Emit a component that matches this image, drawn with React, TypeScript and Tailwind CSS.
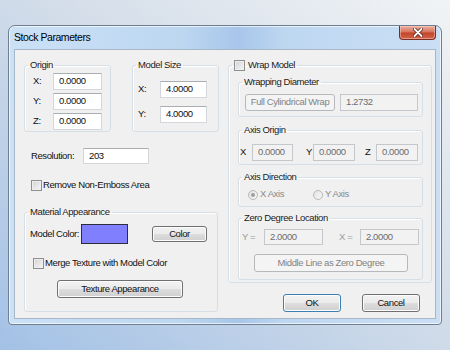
import React from 'react';

// Windows 7 style "Stock Parameters" dialog

const btnFace =
  'bg-[linear-gradient(#f2f2f2_0%,#ebebeb_48%,#dddddd_52%,#cfcfcf_100%)] shadow-[inset_0_0_0_1px_#fcfcfc]';

function Field({ value, className = '', disabled = false }: { value: string; className?: string; disabled?: boolean }) {
  return (
    <div
      className={`flex items-center pl-[5px] border ${
        disabled
          ? 'bg-[#f2f2f2] text-[#6d6d6d] border-[#c4c7cb]'
          : 'bg-white text-[#111] border-[#d3d7dc] border-t-[#abadb3]'
      } ${className}`}
    >
      {value}
    </div>
  );
}

function Btn({
  children,
  className = '',
  disabled = false,
  primary = false,
}: {
  children: React.ReactNode;
  className?: string;
  disabled?: boolean;
  primary?: boolean;
}) {
  return (
    <button
      type="button"
      className={`flex items-center justify-center whitespace-nowrap rounded-[3px] border ${
        disabled
          ? 'border-[#b5b9bc] bg-[#f4f4f4] text-[#838383]'
          : primary
          ? `border-[#3c7fb1] text-[#111] ${btnFace}`
          : `border-[#707070] text-[#111] ${btnFace}`
      } ${className}`}
    >
      {children}
    </button>
  );
}

function Check() {
  return (
    <span className="inline-block w-[11px] h-[11px] shrink-0 border border-[#8e8f8f] bg-[linear-gradient(135deg,#d2d2d2,#f7f7f7)] shadow-[inset_0_0_0_1px_#eeeeee]" />
  );
}

function Radio({ checked = false }: { checked?: boolean }) {
  return (
    <span className="flex items-center justify-center w-[10px] h-[10px] shrink-0 rounded-full border border-[#b9b9b9] bg-[linear-gradient(135deg,#e2e2e2,#f8f8f8)]">
      {checked && <span className="w-[4px] h-[4px] rounded-full bg-[#a0a0a0]" />}
    </span>
  );
}

function Group({
  legend,
  className = '',
  children,
}: {
  legend: React.ReactNode;
  className?: string;
  children?: React.ReactNode;
}) {
  return (
    <fieldset className={`rounded-[3px] border border-[#d5dfe5] shadow-[inset_1px_1px_0_#fff] ${className}`}>
      <legend className="ml-[3px] px-[2px] leading-[12px] text-[#1a1a1a]">{legend}</legend>
      {children}
    </fieldset>
  );
}

export default function App() {
  return (
    <div className="w-[450px] h-[350px] overflow-hidden whitespace-nowrap pt-[25px] pl-[8px] bg-[linear-gradient(to_top_right,#a3c1e6_0%,#d3dde9_55%,#f1f3f5_100%)] font-['Liberation_Sans',Arial,sans-serif] text-[9.5px] tracking-[-0.4px] text-[#111]">
      {/* Window frame */}
      <div className="relative flex flex-col w-[434px] h-[300px] rounded-t-[7px] rounded-b-[4px] border border-[#6f7f91] bg-[linear-gradient(90deg,#cbe1f6_0%,#bdd7f1_40%,#a8c6ea_53%,#bed7f1_64%,#cadff5_100%)] shadow-[inset_0_0_0_1px_rgba(255,255,255,0.65)]">
        {/* Title bar */}
        <div className="flex items-center h-[23px] pl-[5px] text-[10.5px] tracking-[-0.45px] text-[#000]">
          Stock Parameters
        </div>
        <div className="absolute top-0 right-[5px] flex items-center justify-center w-[37px] h-[14px] rounded-b-[4px] border border-t-0 border-[#7a2e22] bg-[linear-gradient(#ebb0a2_0%,#d97a64_42%,#c4462b_55%,#d0644a_100%)] shadow-[inset_0_0_0_1px_rgba(255,220,210,0.45)]">
          <svg width="10" height="9" viewBox="0 0 10 9">
            <path d="M1.5 1 L8.5 8 M8.5 1 L1.5 8" stroke="#5a1c12" strokeWidth="3.4" strokeLinecap="round" />
            <path d="M1.5 1 L8.5 8 M8.5 1 L1.5 8" stroke="#ffffff" strokeWidth="1.8" strokeLinecap="round" />
          </svg>
        </div>

        {/* Client area */}
        <div className="mx-[5px] h-[270px] border border-[#a7b7c8] bg-[#f0f0f0] flex pt-[9px] pl-[9px]">
          {/* Left column */}
          <div className="flex flex-col w-[195px]">
            <div className="flex gap-[21px]">
              <Group legend="Origin" className="w-[87px] h-[73px]">
                <div className="flex flex-col gap-[3px] mt-[2px]">
                  {['X:', 'Y:', 'Z:'].map((l) => (
                    <div key={l} className="flex items-center h-[17px] pl-[8px]">
                      <span className="w-[20px]">{l}</span>
                      <Field value="0.0000" className="w-[49px] h-[17px]" />
                    </div>
                  ))}
                </div>
              </Group>
              <Group legend="Model Size" className="w-[87px] h-[73px]">
                <div className="flex flex-col gap-[8px] mt-[10px]">
                  {['X:', 'Y:'].map((l) => (
                    <div key={l} className="flex items-center h-[17px] pl-[5px]">
                      <span className="w-[22px]">{l}</span>
                      <Field value="4.0000" className="w-[47px] h-[17px]" />
                    </div>
                  ))}
                </div>
              </Group>
            </div>

            <div className="flex items-center mt-[16px] pl-[7px] h-[16px]">
              <span className="w-[52px]">Resolution:</span>
              <Field value="203" className="w-[66px] h-[16px]" />
            </div>

            <div className="flex items-center gap-[1px] mt-[15px] pl-[7px] h-[12px]">
              <Check />
              <span>Remove Non-Emboss Area</span>
            </div>

            <Group legend="Material Appearance" className="mt-[15px] w-[194px] h-[106px]">
              <div className="flex items-center mt-[6px] h-[20px] pl-[5px]">
                <span className="w-[51px]">Model Color:</span>
                <span className="w-[47px] h-[20px] border border-[#2e2e3a] bg-[#8080ff]" />
                <Btn className="ml-[24px] w-[55px] h-[16px]">Color</Btn>
              </div>
              <div className="flex items-center gap-[1px] mt-[13px] h-[12px] pl-[8px]">
                <Check />
                <span>Merge Texture with Model Color</span>
              </div>
              <Btn className="mt-[11px] ml-[32px] w-[126px] h-[18px]">Texture Appearance</Btn>
            </Group>
          </div>

          {/* Right column */}
          <div className="flex flex-col ml-[9px] w-[204px]">
            <Group
              legend={
                <span className="flex items-center gap-[3px]">
                  <Check />
                  <span>Wrap Model</span>
                </span>
              }
              className="w-[204px] h-[224px]"
            >
              <div className="flex flex-col ml-[9px]">
                <Group legend="Wrapping Diameter" className="mt-[5px] w-[185px] h-[41px]">
                  <div className="flex items-center mt-[6px] ml-[6px] gap-[5px]">
                    <Btn disabled className="w-[90px] h-[17px]">Full Cylindrical Wrap</Btn>
                    <Field disabled value="1.2732" className="w-[78px] h-[17px]" />
                  </div>
                </Group>

                <Group legend="Axis Origin" className="mt-[7px] w-[185px] h-[41px]">
                  <div className="flex items-center mt-[8px] pl-[1px] h-[17px]">
                    <span className="w-[12px]">X</span>
                    <Field disabled value="0.0000" className="w-[41px] h-[17px]" />
                    <span className="ml-[13px] w-[7px]">Y</span>
                    <Field disabled value="0.0000" className="w-[42px] h-[17px]" />
                    <span className="ml-[10px] w-[11px]">Z</span>
                    <Field disabled value="0.0000" className="w-[42px] h-[17px]" />
                  </div>
                </Group>

                <Group legend="Axis Direction" className="mt-[6px] w-[185px] h-[36px]">
                  <div className="flex items-center mt-[6px] h-[11px] pl-[9px] text-[#8a8a8a]">
                    <Radio checked />
                    <span className="ml-[2px] w-[53px]">X Axis</span>
                    <Radio />
                    <span className="ml-[2px]">Y Axis</span>
                  </div>
                </Group>

                <Group legend="Zero Degree Location" className="mt-[5px] w-[185px] h-[68px]">
                  <div className="flex items-center mt-[5px] h-[16px] pl-[3px]">
                    <span className="w-[22px] text-[#9a9a9a]">Y =</span>
                    <Field disabled value="2.0000" className="w-[59px] h-[16px]" />
                    <span className="ml-[16px] w-[21px] text-[#9a9a9a]">X =</span>
                    <Field disabled value="2.0000" className="w-[59px] h-[16px]" />
                  </div>
                  <Btn disabled className="mt-[9px] ml-[15px] w-[154px] h-[18px]">
                    Middle Line as Zero Degree
                  </Btn>
                </Group>
              </div>
            </Group>

            <div className="flex mt-[11px] pl-[55px] gap-[21px]">
              <Btn primary className="w-[58px] h-[18px]">OK</Btn>
              <Btn className="w-[58px] h-[18px]">Cancel</Btn>
            </div>
          </div>
        </div>
      </div>
    </div>
  );
}
